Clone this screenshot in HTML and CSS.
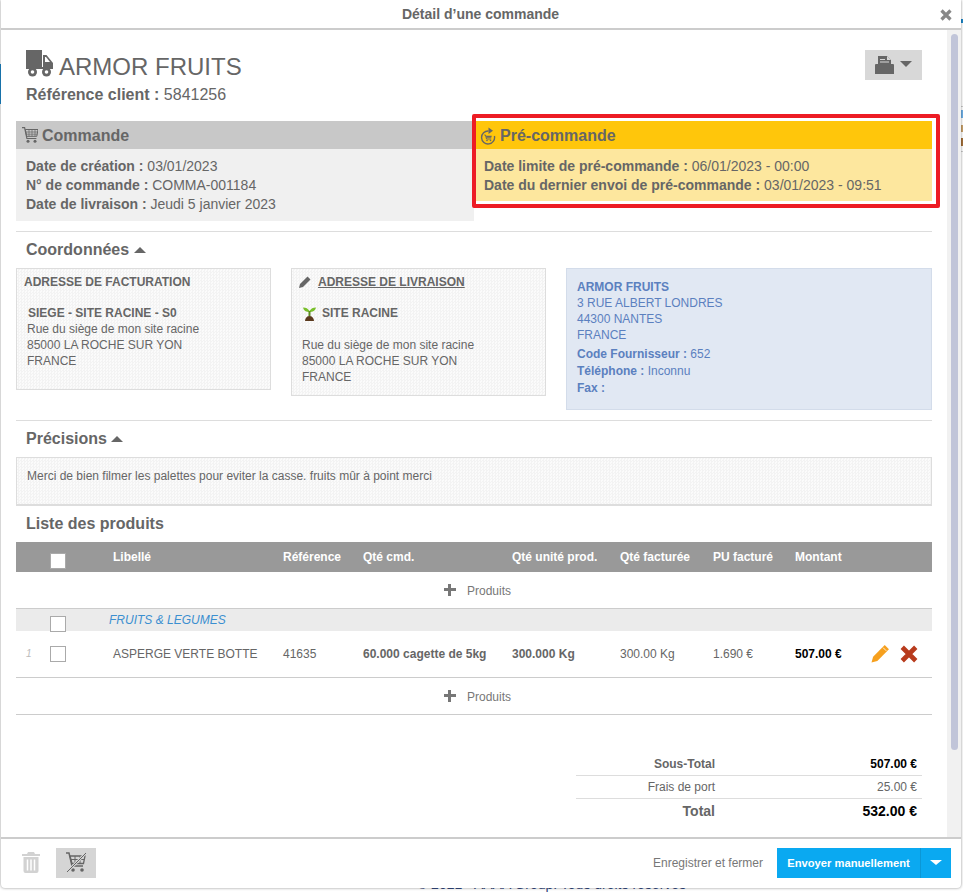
FILE: index.html
```html
<!DOCTYPE html>
<html lang="fr">
<head>
  <meta charset="UTF-8"/>
  <title>Détail d'une commande</title>
  <link rel="stylesheet" href="styles.css">
</head>
<body>
  <div class="page-footer">© 2021 - AAAA Group. Tous droits réservés</div>
  <div class="side-mark side-left"></div>
  <div class="side-mark side-right"></div>

  <div class="modal">
    <div class="modal-head">
      <span>Détail d’une commande</span>
      <svg class="close-icon" viewBox="0 0 12 12"><path d="M1.500 1.500l9 9M10.500 1.500l-9 9"/></svg>
    </div>

    <div class="modal-main">
      <div class="content">
        <div class="top">
          <div>
            <h1 class="supplier">
              <svg class="truck-icon" viewBox="0 0 27 27">
                <rect x="0" y="0" width="16" height="18" fill="#666"/>
                <path d="M17 5h3.500l6.500 8v5H17z" fill="#666"/>
                <path d="M19 7h1l4 5h-5z" fill="#fff"/>
                <rect x="0" y="17" width="27" height="2" fill="#666"/>
                <circle cx="6.500" cy="22" r="4.500" fill="#666"/>
                <circle cx="6.500" cy="22" r="1.800" fill="#fff"/>
                <circle cx="20.500" cy="22" r="4.500" fill="#666"/>
                <circle cx="20.500" cy="22" r="1.800" fill="#fff"/>
              </svg>
              ARMOR FRUITS
            </h1>
            <div class="client-ref"><b>Référence client :</b> 5841256</div>
          </div>
          <button class="print-btn">
            <svg class="print-icon" viewBox="0 0 19 18">
              <path d="M3 0h9l4 4v4H3z" fill="#666"/>
              <path d="M12 0v4h4z" fill="#d8d8d8"/>
              <path d="M5 3h5v1H5zM5 5.500h9v1H5z" fill="#d8d8d8"/>
              <path d="M1 8h17a1 1 0 0 1 1 1v3h-1v1H1v-1H0V9a1 1 0 0 1 1-1z" fill="#666"/>
              <rect x="0" y="12" width="19" height="6" fill="#666"/>
            </svg>
            <span class="caret caret-big"></span>
          </button>
        </div>

        <div class="info-row">
          <div class="info info-order">
            <div class="info-title">
              <svg class="cart-icon" viewBox="0 0 16 16">
                <path d="M0 .7h2.600l2.300 10.800h9.500" fill="none" stroke="#666" stroke-width="1.200"/>
                <path d="M3.300 2.500H16l-1.200 6.800H4.700z" fill="none" stroke="#666"/>
                <path d="M3.500 5h12M4 7.200h11.300M7 2.500v6.800M10 2.500v6.800M13 2.500v6.800" stroke="#666" stroke-width=".7"/>
                <circle cx="6" cy="14.300" r="1.500" fill="#666"/>
                <circle cx="13" cy="14.300" r="1.500" fill="#666"/>
              </svg>
              Commande
            </div>
            <div class="info-body">
              <div><b>Date de création :</b> 03/01/2023</div>
              <div><b>N° de commande :</b> COMMA-001184</div>
              <div><b>Date de livraison :</b> Jeudi 5 janvier 2023</div>
            </div>
          </div>
          <div class="info info-pre">
            <div class="info-title">
              <svg class="pre-icon" viewBox="0 0 16 18">
                <path d="M8.500 4A6.500 6.500 0 1 0 14.400 9" fill="none" stroke="#666" stroke-width="1.400"/>
                <path d="M8.500 .5L13 3.800 8.500 7z" fill="#666"/>
                <path d="M4.300 8h1.200l1 4h4.800" fill="none" stroke="#666"/>
                <path d="M6 8.800h5.800l-.6 2H6.400z" fill="#666"/>
                <circle cx="7" cy="13.500" r=".8" fill="#666"/>
                <circle cx="10.500" cy="13.500" r=".8" fill="#666"/>
              </svg>
              Pré-commande
            </div>
            <div class="info-body">
              <div><b>Date limite de pré-commande :</b> 06/01/2023 - 00:00</div>
              <div><b>Date du dernier envoi de pré-commande :</b> 03/01/2023 - 09:51</div>
            </div>
          </div>
          <div class="red-frame"></div>
        </div>

        <div class="section section-lined">
          <h2>Coordonnées <span class="caret-up"></span></h2>
        </div>
        <div class="address-row">
          <div class="address address-bill">
            <div class="address-title">ADRESSE DE FACTURATION</div>
            <div class="address-site"><b>SIEGE - SITE RACINE - S0</b></div>
            <div class="address-lines">Rue du siège de mon site racine<br>85000 LA ROCHE SUR YON<br>FRANCE</div>
          </div>
          <div class="address address-ship">
            <div class="address-title">
              <svg class="pencil-small" viewBox="0 0 12 12"><path d="M8.500.5l3 3-7.500 7.500L0 12l1-4z" fill="#666"/></svg>
              <a href="#">ADRESSE DE LIVRAISON</a>
            </div>
            <div class="address-site">
              <svg class="sprout" viewBox="0 0 13 15">
                <path d="M6.500 5C5 2.500 3 1.500 0 1.500 .5 4.500 3 6 6.500 6 10 6 12.500 4.500 13 1.500c-3 0-5 1-6.500 3.500z" fill="#7ac02c"/>
                <rect x="5.500" y="5" width="2" height="5" fill="#5d8a1f"/>
                <path d="M2 15c0-3 2-5 4.500-5S11 12 11 15z" fill="#5b3a1e"/>
              </svg>
              <b>SITE RACINE</b>
            </div>
            <div class="address-lines">Rue du siège de mon site racine<br>85000 LA ROCHE SUR YON<br>FRANCE</div>
          </div>
          <div class="supplier-box">
            <b>ARMOR FRUITS</b><br>
            3 RUE ALBERT LONDRES<br>
            44300 NANTES<br>
            FRANCE
            <div class="supplier-extra">
              <div><b>Code Fournisseur :</b> 652</div>
              <div><b>Téléphone :</b> Inconnu</div>
              <div><b>Fax :</b></div>
            </div>
          </div>
        </div>

        <div class="section section-lined section-notes">
          <h2>Précisions <span class="caret-up"></span></h2>
        </div>
        <div class="notes">Merci de bien filmer les palettes pour eviter la casse. fruits mûr à point merci</div>

        <div class="section section-list">
          <h2>Liste des produits</h2>
        </div>

        <table class="products">
          <colgroup>
            <col class="c-num"><col class="c-check"><col class="c-name"><col class="c-ref"><col class="c-qty">
            <col class="c-unit"><col class="c-bill"><col class="c-price"><col class="c-amount"><col>
          </colgroup>
          <thead>
            <tr>
              <th></th>
              <th><input type="checkbox" class="check check-head"></th>
              <th>Libellé</th>
              <th>Référence</th>
              <th>Qté cmd.</th>
              <th>Qté unité prod.</th>
              <th>Qté facturée</th>
              <th>PU facturé</th>
              <th>Montant</th>
              <th></th>
            </tr>
          </thead>
          <tbody>
            <tr class="add-row">
              <td colspan="10"><span class="plus"></span>Produits</td>
            </tr>
            <tr class="cat-row">
              <td></td>
              <td><input type="checkbox" class="check"></td>
              <td colspan="8"><i>FRUITS &amp; LEGUMES</i></td>
            </tr>
            <tr class="item-row">
              <td class="num">1</td>
              <td><input type="checkbox" class="check"></td>
              <td>ASPERGE VERTE BOTTE</td>
              <td>41635</td>
              <td><b>60.000 cagette de 5kg</b></td>
              <td><b>300.000 Kg</b></td>
              <td>300.00 Kg</td>
              <td>1.690 €</td>
              <td class="amount">507.00 €</td>
              <td class="actions">
                <svg class="edit-icon" viewBox="0 0 18 18">
                  <path d="M13 1l4 4L6 16 .5 17.500 2 12z" fill="#f6a01e"/>
                  <path d="M11.500 3.500l3 3" stroke="#fff" stroke-width=".8"/>
                </svg>
                <svg class="del-icon" viewBox="0 0 16 16"><path d="M2 2l12 12M14 2L2 14"/></svg>
              </td>
            </tr>
            <tr class="add-row add-last">
              <td colspan="10"><span class="plus"></span>Produits</td>
            </tr>
          </tbody>
        </table>

        <div class="totals">
          <div class="total-line line-sub"><span><b>Sous-Total</b></span><b class="val">507.00 €</b></div>
          <div class="total-line line-port"><span>Frais de port</span><span>25.00 €</span></div>
          <div class="total-line line-total"><span><b>Total</b></span><b class="val">532.00 €</b></div>
        </div>
      </div>
      <div class="scrollbar"><div class="scroll-thumb"></div></div>
    </div>

    <div class="modal-foot">
      <div class="foot-left">
        <svg class="trash-icon" viewBox="0 0 18 21">
          <path d="M6 0h6l1 2h5v2H0V2h5z" fill="#d2d2d2"/>
          <path d="M1.500 5h15v14a2 2 0 0 1-2 2h-11a2 2 0 0 1-2-2z" fill="#d2d2d2"/>
          <path d="M5.500 7.500v11M9 7.500v11M12.500 7.500v11" stroke="#fff" stroke-width="1.500"/>
        </svg>
        <button class="nocart-btn">
          <svg class="nocart-icon" viewBox="0 0 20 21">
            <path d="M0 1h3l3 13h11" fill="none" stroke="#666" stroke-width="1.500"/>
            <path d="M4 4h15l-1.500 7.500H6z" fill="none" stroke="#666" stroke-width="1.300"/>
            <path d="M4.500 7.500h14M9 4v7.500M14 4v7.500" stroke="#666"/>
            <circle cx="7" cy="18" r="1.800" fill="#666"/>
            <circle cx="16" cy="18" r="1.800" fill="#666"/>
            <path d="M1 20L20 1" stroke="#d5d5d5" stroke-width="2.500"/>
            <path d="M1 20L20 1" stroke="#666" stroke-width="1"/>
          </svg>
        </button>
      </div>
      <div class="foot-right">
        <a class="save-link" href="#">Enregistrer et fermer</a>
        <div class="send-group">
          <button class="send-btn">Envoyer manuellement</button>
          <button class="send-more"><span class="caret caret-white"></span></button>
        </div>
      </div>
    </div>
  </div>
</body>
</html>
```

FILE: styles.css
```css
html, body {
  height: 100%;
}

body {
  margin: 0;
  background: #fff;
  color: #666;
  font-family: "Liberation Sans", Arial, sans-serif;
  font-size: 14px;
  overflow: hidden;
  display: flex;
  flex-direction: column;
  justify-content: flex-end;
  align-items: center;
}

/* page behind the modal */
.page-footer {
  color: #34497f;
  font-size: 14px;
  line-height: 16px;
  margin-left: 140px;
}

.side-mark {
  position: absolute;
}

.side-left {
  left: 0;
  top: 64px;
  width: 1px;
  height: 40px;
  background: #1c87c9;
}

.side-right {
  right: 0;
  top: 19px;
  width: 2px;
  height: 133px;
  background: linear-gradient(#1c87c9 0 4px, #fff 4px 87px, #ccc 87px 88px, #fff 88px 91px,
    #6fb0e8 91px 99px, #fff 99px 106px, #c9a26b 106px 113px, #fff 113px 119px,
    #a5713a 119px 127px, #fff 127px 132px, #ccc 132px 133px);
}

.modal {
  position: absolute;
  left: 1px;
  top: 0;
  width: 960px;
  height: 888px;
  background: #fff;
  border-radius: 0 0 4px 4px;
  box-shadow: 0 0 3px rgba(0,0,0,0.45);
  display: flex;
  flex-direction: column;
}

.modal-head {
  height: 28px;
  border-bottom: 2px solid #ccc;
  display: flex;
  align-items: center;
  justify-content: center;
  font-size: 14px;
  font-weight: bold;
  position: relative;
  padding-right: 1px;
}

.close-icon {
  position: absolute;
  right: 9px;
  top: 9px;
  width: 12px;
  height: 12px;
  fill: none;
  stroke: #888;
  stroke-width: 3.2;
}

.modal-main {
  flex: 1;
  display: flex;
  min-height: 0;
}

.content {
  flex: 1;
  padding: 20px 15px 0 15px;
  min-width: 0;
}

.scrollbar {
  width: 14px;
  background: #f1f1f1;
  padding: 4px 3px 0 4px;
  box-sizing: border-box;
}

.scroll-thumb {
  height: 716px;
  width: 7px;
  background: #c1c5d9;
  border-radius: 4px;
}

.top {
  display: flex;
  justify-content: space-between;
  padding-right: 10px;
  padding-left: 10px;
  height: 71px;
}

.supplier {
  margin: 0;
  font-size: 24px;
  font-weight: normal;
  line-height: 32px;
  display: flex;
  align-items: flex-end;
  gap: 6px;
  height: 33px;
}

.truck-icon {
  width: 27px;
  height: 27px;
  margin-bottom: 6px;
}

.client-ref {
  font-size: 16px;
  line-height: 20px;
  margin-top: 2px;
}

.print-btn {
  width: 57px;
  height: 30px;
  border: none;
  padding: 0;
  background: #d8d8d8;
  display: flex;
  align-items: center;
  justify-content: center;
  gap: 6px;
}

.print-icon {
  width: 19px;
  height: 18px;
}

.caret {
  display: inline-block;
  width: 0;
  height: 0;
  border-left: 6px solid transparent;
  border-right: 6px solid transparent;
  border-top: 6px solid #666;
}

.caret-big {
  margin-bottom: 3px;
}

.caret-white {
  border-top-color: #fff;
  border-top-width: 5px;
}

.caret-up {
  display: inline-block;
  width: 0;
  height: 0;
  border-left: 6px solid transparent;
  border-right: 6px solid transparent;
  border-bottom: 6px solid #666;
  vertical-align: 2px;
}

.info-row {
  display: flex;
  position: relative;
  gap: 2px;
  align-items: flex-start;
}

.info-order {
  width: 458px;
  background: #f0f0f0;
}

.info-pre {
  flex: 1;
  background: #fde79e;
}

.info-title {
  height: 28px;
  box-sizing: border-box;
  padding-top: 1px;
  font-size: 16px;
  font-weight: bold;
  display: flex;
  align-items: center;
  gap: 4px;
}

.info-order .info-title {
  background: #c8c8c8;
  padding-left: 6px;
}

.info-pre .info-title {
  background: #ffc60b;
  padding-left: 4px;
}

.cart-icon {
  width: 16px;
  height: 16px;
  margin-bottom: 1px;
}

.pre-icon {
  width: 16px;
  height: 18px;
}

.info-body {
  padding: 8px 10px 6px 10px;
  line-height: 19px;
}

.info-pre .info-body {
  padding-left: 8px;
}

.info-order .info-body {
  padding-bottom: 7px;
}

.red-frame {
  position: absolute;
  left: 456px;
  top: -7px;
  width: 460px;
  height: 86px;
  border: 4px solid #ed1c24;
  border-radius: 2px;
}

.section {
  padding-left: 10px;
}

.section h2 {
  margin: 0;
  font-size: 16px;
  line-height: 20px;
}

.section-lined {
  border-top: 1px solid #ddd;
  margin-top: 10px;
  padding-top: 8px;
  padding-bottom: 8px;
}

.section-notes {
  margin-top: 10px;
}

.section-list {
  margin-top: 8px;
  padding-bottom: 8px;
}

.address-row {
  display: flex;
  gap: 20px;
  align-items: flex-start;
  font-size: 12px;
  line-height: 16px;
}

.address, .notes {
  background-color: #fafafa;
  background-image: repeating-conic-gradient(#f3f3f3 0 25%, #fbfbfb 0 50%);
  background-size: 3px 3px;
  border: 1px solid #ddd;
  box-sizing: border-box;
}

.address {
  width: 255px;
}

.address-bill {
  height: 122px;
  padding: 5px 7px;
}

.address-ship {
  height: 128px;
  padding: 5px 10px;
}

.address-title {
  font-weight: bold;
  display: flex;
  align-items: center;
  gap: 6px;
}

.address-ship .address-title {
  margin-left: -3px;
  gap: 7px;
}

.address-title a {
  color: #666;
}

.pencil-small {
  width: 12px;
  height: 12px;
}

.address-site {
  margin-top: 15px;
  display: flex;
  align-items: center;
  gap: 6px;
}

.address-bill .address-site {
  padding-left: 4px;
}

.address-ship .address-site {
  padding-left: 1px;
  margin-bottom: 16px;
}

.address-bill .address-lines {
  padding-left: 3px;
}

.sprout {
  width: 13px;
  height: 15px;
}

.supplier-box {
  flex: 1;
  height: 142px;
  box-sizing: border-box;
  background: #e1e8f3;
  border: 1px solid #d3dcea;
  color: #5b80bf;
  padding: 10px;
}

.supplier-extra {
  margin-top: 3px;
  line-height: 17px;
}

.notes {
  height: 49px;
  padding: 10px;
  font-size: 12px;
  line-height: 16px;
  border-bottom-width: 2px;
}

.products {
  width: 916px;
  border-collapse: collapse;
  table-layout: fixed;
  font-size: 12px;
}

.c-num { width: 34px; }
.c-check { width: 63px; }
.c-name { width: 170px; }
.c-ref { width: 80px; }
.c-qty { width: 149px; }
.c-unit { width: 108px; }
.c-bill { width: 93px; }
.c-price { width: 82px; }
.c-amount { width: 73px; }

.products th, .products td {
  padding: 0;
  text-align: left;
}

.products th {
  background: #999;
  color: #fff;
  height: 30px;
  font-weight: bold;
  vertical-align: top;
  padding-top: 8px;
  box-sizing: border-box;
  line-height: 14px;
}

.check {
  appearance: none;
  display: block;
  width: 16px;
  height: 16px;
  margin: 0;
  background: #fff;
  border: 1px solid #aaa;
  box-sizing: border-box;
}

.check-head {
  margin-top: 3px;
  margin-bottom: -3px;
}

.products .add-row td {
  height: 36px;
  border-bottom: 1px solid #ccc;
  text-align: center;
  color: #777;
  padding: 2px 0 0 7px;
  box-sizing: border-box;
}

.products .add-last td {
  height: 37px;
}

.plus {
  display: inline-block;
  width: 12px;
  height: 12px;
  margin-right: 11px;
  vertical-align: -1px;
  background:
    linear-gradient(#777, #777) center / 12px 3px no-repeat,
    linear-gradient(#777, #777) center / 3px 12px no-repeat;
}

.cat-row td {
  height: 22px;
  background: #ebebeb;
  vertical-align: top;
  color: #3b8fd0;
  line-height: 22px;
  text-indent: -4px;
}

.cat-row .check {
  margin-top: 7px;
  margin-bottom: -1px;
}

.item-row td {
  height: 46px;
  border-bottom: 1px solid #ccc;
}

.products .num {
  font-size: 10px;
  font-style: italic;
  color: #bbb;
  padding-left: 10px;
}

.amount {
  color: #000;
  font-weight: bold;
}

.actions {
  white-space: nowrap;
}

.edit-icon {
  width: 19px;
  height: 19px;
  margin-left: 3px;
  vertical-align: middle;
}

.del-icon {
  width: 18px;
  height: 18px;
  margin-left: 7px;
  vertical-align: middle;
  fill: none;
  stroke: #b83b1d;
  stroke-width: 4.2;
}

.totals {
  width: 346px;
  margin: 38px 0 0 auto;
  position: relative;
  right: 10px;
  font-size: 12px;
}

.total-line {
  display: flex;
  justify-content: space-between;
  padding: 0 5px 0 0;
  height: 23px;
  box-sizing: border-box;
  align-items: center;
  border-bottom: 1px solid #ddd;
}

.total-line > :first-child {
  width: 139px;
  text-align: right;
}

.val {
  color: #000;
}

.line-total {
  border-bottom: none;
  font-size: 14px;
  height: 25px;
}

.modal-foot {
  height: 49px;
  box-sizing: content-box;
  border-top: 2px solid #ccc;
  display: flex;
  justify-content: space-between;
  align-items: center;
  padding: 0 10px 0 21px;
}

.foot-left, .foot-right {
  margin-bottom: 2px;
}

.foot-left {
  display: flex;
  align-items: center;
  gap: 16px;
}

.trash-icon {
  width: 18px;
  height: 21px;
}

.nocart-btn {
  width: 40px;
  height: 30px;
  border: none;
  padding: 0;
  background: #d5d5d5;
  display: flex;
  align-items: center;
  justify-content: center;
}

.nocart-icon {
  width: 20px;
  height: 21px;
}

.foot-right {
  display: flex;
  align-items: center;
  gap: 14px;
}

.save-link {
  color: #777;
  font-size: 12px;
  text-decoration: none;
}

.send-group {
  display: flex;
}

.send-btn, .send-more {
  height: 30px;
  border: none;
  background: #0aa9f1;
  color: #fff;
  font-family: inherit;
  font-size: 11.2px;
  font-weight: bold;
  padding: 0;
}

.send-btn {
  width: 143px;
}

.send-more {
  width: 31px;
  border-left: 1px solid #0b97d6;
  display: flex;
  align-items: center;
  justify-content: center;
}
```
